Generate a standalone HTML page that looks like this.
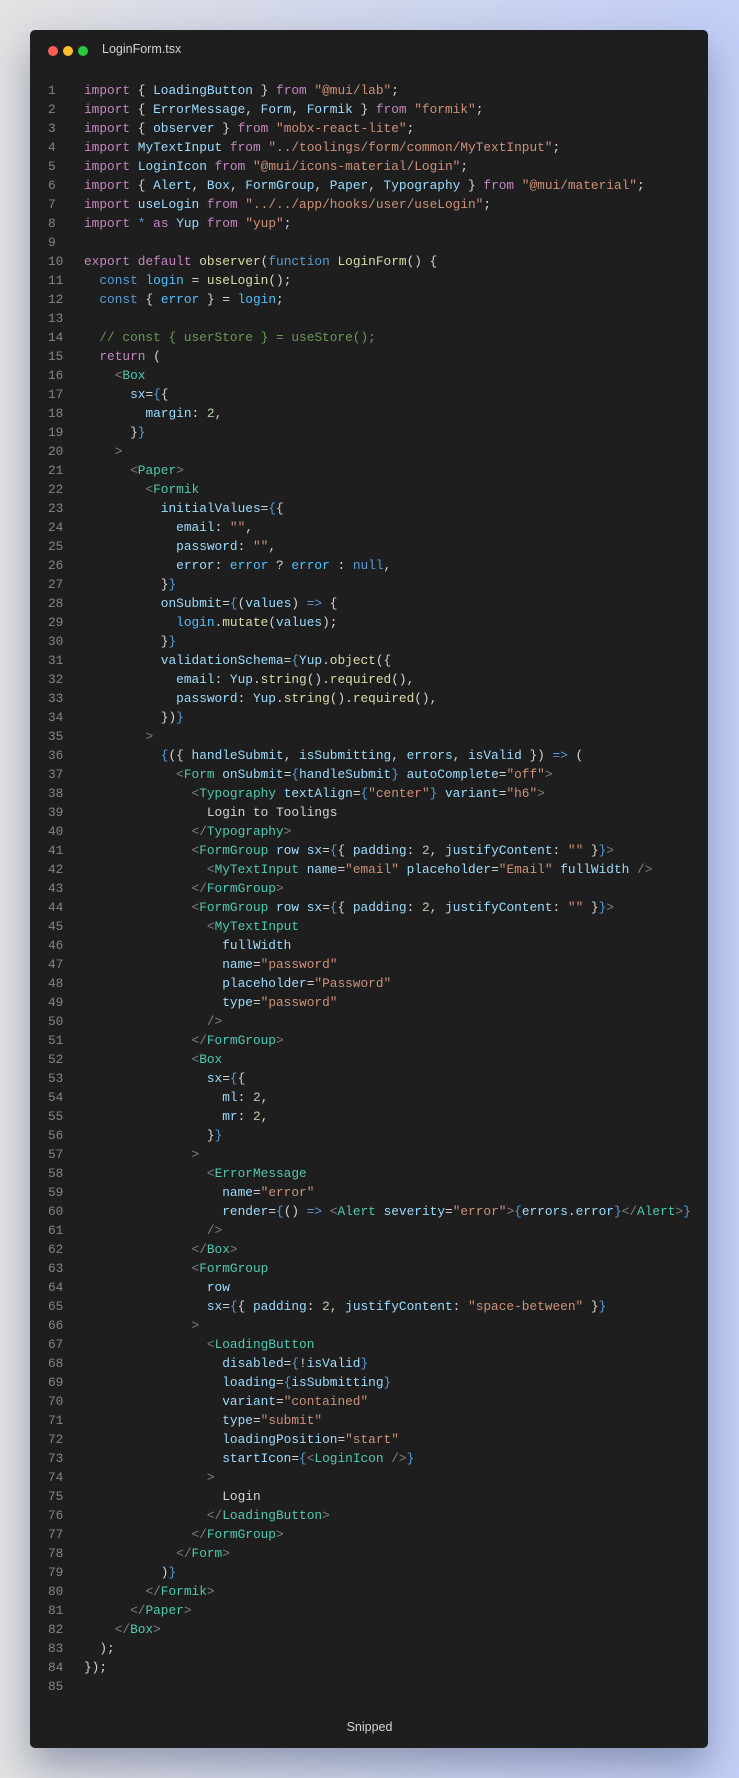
<!DOCTYPE html>
<html><head><meta charset="utf-8"><style>
html,body{margin:0;padding:0}
body{width:739px;height:1778px;background:linear-gradient(90deg,#e2e2e2 0%,#d0d6ec 50%,#c3cff7 100%);position:relative;overflow:hidden;font-family:"Liberation Sans",sans-serif}
.card{position:absolute;left:30px;top:30px;width:678px;height:1718px;background:#1e1e1e;border-radius:5px;box-shadow:0 18px 40px rgba(60,70,110,.45)}
.dot{position:absolute;top:46px;width:10px;height:10px;border-radius:50%}
.title{position:absolute;left:102px;top:42px;color:#d4d4d4;font-size:12.5px}
.code{position:absolute;left:0;top:81px;width:739px;font-family:"Liberation Mono",monospace;font-size:12.8px;color:#d4d4d4;white-space:normal}
.l{height:19px;line-height:19px;position:relative}
.n{position:absolute;left:48px;color:#858585}
.c0{position:absolute;left:84px;white-space:pre}
.k{color:#c586c0}.v{color:#9cdcfe}.s{color:#ce9178}.f{color:#dcdcaa}.t{color:#4ec9b0}.g{color:#808080}.b{color:#569cd6}.cm{color:#6a9955}.nu{color:#b5cea8}.cv{color:#4fc1ff}
.snip{position:absolute;left:0;width:739px;text-align:center;top:1720px;color:#d4d4d4;font-size:12.5px}
</style></head><body>
<div class="card"></div>
<div class="dot" style="left:48px;background:#ff5f57"></div>
<div class="dot" style="left:63px;background:#febc2e"></div>
<div class="dot" style="left:78px;background:#28c840"></div>
<div class="title">LoginForm.tsx</div>
<div class="code">
<div class="l"><span class="n">1</span><span class="c0"><span class="k">import</span> { <span class="v">LoadingButton</span> } <span class="k">from</span> <span class="s">"@mui/lab"</span>;</span></div>
<div class="l"><span class="n">2</span><span class="c0"><span class="k">import</span> { <span class="v">ErrorMessage</span>, <span class="v">Form</span>, <span class="v">Formik</span> } <span class="k">from</span> <span class="s">"formik"</span>;</span></div>
<div class="l"><span class="n">3</span><span class="c0"><span class="k">import</span> { <span class="v">observer</span> } <span class="k">from</span> <span class="s">"mobx-react-lite"</span>;</span></div>
<div class="l"><span class="n">4</span><span class="c0"><span class="k">import</span> <span class="v">MyTextInput</span> <span class="k">from</span> <span class="s">"../toolings/form/common/MyTextInput"</span>;</span></div>
<div class="l"><span class="n">5</span><span class="c0"><span class="k">import</span> <span class="v">LoginIcon</span> <span class="k">from</span> <span class="s">"@mui/icons-material/Login"</span>;</span></div>
<div class="l"><span class="n">6</span><span class="c0"><span class="k">import</span> { <span class="v">Alert</span>, <span class="v">Box</span>, <span class="v">FormGroup</span>, <span class="v">Paper</span>, <span class="v">Typography</span> } <span class="k">from</span> <span class="s">"@mui/material"</span>;</span></div>
<div class="l"><span class="n">7</span><span class="c0"><span class="k">import</span> <span class="v">useLogin</span> <span class="k">from</span> <span class="s">"../../app/hooks/user/useLogin"</span>;</span></div>
<div class="l"><span class="n">8</span><span class="c0"><span class="k">import</span> <span class="b">*</span> <span class="k">as</span> <span class="v">Yup</span> <span class="k">from</span> <span class="s">"yup"</span>;</span></div>
<div class="l"><span class="n">9</span></div>
<div class="l"><span class="n">10</span><span class="c0"><span class="k">export</span> <span class="k">default</span> <span class="f">observer</span>(<span class="b">function</span> <span class="f">LoginForm</span>() {</span></div>
<div class="l"><span class="n">11</span><span class="c0">  <span class="b">const</span> <span class="cv">login</span> = <span class="f">useLogin</span>();</span></div>
<div class="l"><span class="n">12</span><span class="c0">  <span class="b">const</span> { <span class="cv">error</span> } = <span class="cv">login</span>;</span></div>
<div class="l"><span class="n">13</span></div>
<div class="l"><span class="n">14</span><span class="c0">  <span class="cm">// const { userStore } = useStore();</span></span></div>
<div class="l"><span class="n">15</span><span class="c0">  <span class="k">return</span> (</span></div>
<div class="l"><span class="n">16</span><span class="c0">    <span class="g">&lt;</span><span class="t">Box</span></span></div>
<div class="l"><span class="n">17</span><span class="c0">      <span class="v">sx</span>=<span class="b">{</span>{</span></div>
<div class="l"><span class="n">18</span><span class="c0">        <span class="v">margin</span>: <span class="nu">2</span>,</span></div>
<div class="l"><span class="n">19</span><span class="c0">      }<span class="b">}</span></span></div>
<div class="l"><span class="n">20</span><span class="c0">    <span class="g">&gt;</span></span></div>
<div class="l"><span class="n">21</span><span class="c0">      <span class="g">&lt;</span><span class="t">Paper</span><span class="g">&gt;</span></span></div>
<div class="l"><span class="n">22</span><span class="c0">        <span class="g">&lt;</span><span class="t">Formik</span></span></div>
<div class="l"><span class="n">23</span><span class="c0">          <span class="v">initialValues</span>=<span class="b">{</span>{</span></div>
<div class="l"><span class="n">24</span><span class="c0">            <span class="v">email</span>: <span class="s">""</span>,</span></div>
<div class="l"><span class="n">25</span><span class="c0">            <span class="v">password</span>: <span class="s">""</span>,</span></div>
<div class="l"><span class="n">26</span><span class="c0">            <span class="v">error</span>: <span class="cv">error</span> ? <span class="cv">error</span> : <span class="b">null</span>,</span></div>
<div class="l"><span class="n">27</span><span class="c0">          }<span class="b">}</span></span></div>
<div class="l"><span class="n">28</span><span class="c0">          <span class="v">onSubmit</span>=<span class="b">{</span>(<span class="v">values</span>) <span class="b">=&gt;</span> {</span></div>
<div class="l"><span class="n">29</span><span class="c0">            <span class="cv">login</span>.<span class="f">mutate</span>(<span class="v">values</span>);</span></div>
<div class="l"><span class="n">30</span><span class="c0">          }<span class="b">}</span></span></div>
<div class="l"><span class="n">31</span><span class="c0">          <span class="v">validationSchema</span>=<span class="b">{</span><span class="v">Yup</span>.<span class="f">object</span>({</span></div>
<div class="l"><span class="n">32</span><span class="c0">            <span class="v">email</span>: <span class="v">Yup</span>.<span class="f">string</span>().<span class="f">required</span>(),</span></div>
<div class="l"><span class="n">33</span><span class="c0">            <span class="v">password</span>: <span class="v">Yup</span>.<span class="f">string</span>().<span class="f">required</span>(),</span></div>
<div class="l"><span class="n">34</span><span class="c0">          })<span class="b">}</span></span></div>
<div class="l"><span class="n">35</span><span class="c0">        <span class="g">&gt;</span></span></div>
<div class="l"><span class="n">36</span><span class="c0">          <span class="b">{</span>({ <span class="v">handleSubmit</span>, <span class="v">isSubmitting</span>, <span class="v">errors</span>, <span class="v">isValid</span> }) <span class="b">=&gt;</span> (</span></div>
<div class="l"><span class="n">37</span><span class="c0">            <span class="g">&lt;</span><span class="t">Form</span> <span class="v">onSubmit</span>=<span class="b">{</span><span class="v">handleSubmit</span><span class="b">}</span> <span class="v">autoComplete</span>=<span class="s">"off"</span><span class="g">&gt;</span></span></div>
<div class="l"><span class="n">38</span><span class="c0">              <span class="g">&lt;</span><span class="t">Typography</span> <span class="v">textAlign</span>=<span class="b">{</span><span class="s">"center"</span><span class="b">}</span> <span class="v">variant</span>=<span class="s">"h6"</span><span class="g">&gt;</span></span></div>
<div class="l"><span class="n">39</span><span class="c0">                Login to Toolings</span></div>
<div class="l"><span class="n">40</span><span class="c0">              <span class="g">&lt;/</span><span class="t">Typography</span><span class="g">&gt;</span></span></div>
<div class="l"><span class="n">41</span><span class="c0">              <span class="g">&lt;</span><span class="t">FormGroup</span> <span class="v">row</span> <span class="v">sx</span>=<span class="b">{</span>{ <span class="v">padding</span>: <span class="nu">2</span>, <span class="v">justifyContent</span>: <span class="s">""</span> }<span class="b">}</span><span class="g">&gt;</span></span></div>
<div class="l"><span class="n">42</span><span class="c0">                <span class="g">&lt;</span><span class="t">MyTextInput</span> <span class="v">name</span>=<span class="s">"email"</span> <span class="v">placeholder</span>=<span class="s">"Email"</span> <span class="v">fullWidth</span> <span class="g">/&gt;</span></span></div>
<div class="l"><span class="n">43</span><span class="c0">              <span class="g">&lt;/</span><span class="t">FormGroup</span><span class="g">&gt;</span></span></div>
<div class="l"><span class="n">44</span><span class="c0">              <span class="g">&lt;</span><span class="t">FormGroup</span> <span class="v">row</span> <span class="v">sx</span>=<span class="b">{</span>{ <span class="v">padding</span>: <span class="nu">2</span>, <span class="v">justifyContent</span>: <span class="s">""</span> }<span class="b">}</span><span class="g">&gt;</span></span></div>
<div class="l"><span class="n">45</span><span class="c0">                <span class="g">&lt;</span><span class="t">MyTextInput</span></span></div>
<div class="l"><span class="n">46</span><span class="c0">                  <span class="v">fullWidth</span></span></div>
<div class="l"><span class="n">47</span><span class="c0">                  <span class="v">name</span>=<span class="s">"password"</span></span></div>
<div class="l"><span class="n">48</span><span class="c0">                  <span class="v">placeholder</span>=<span class="s">"Password"</span></span></div>
<div class="l"><span class="n">49</span><span class="c0">                  <span class="v">type</span>=<span class="s">"password"</span></span></div>
<div class="l"><span class="n">50</span><span class="c0">                <span class="g">/&gt;</span></span></div>
<div class="l"><span class="n">51</span><span class="c0">              <span class="g">&lt;/</span><span class="t">FormGroup</span><span class="g">&gt;</span></span></div>
<div class="l"><span class="n">52</span><span class="c0">              <span class="g">&lt;</span><span class="t">Box</span></span></div>
<div class="l"><span class="n">53</span><span class="c0">                <span class="v">sx</span>=<span class="b">{</span>{</span></div>
<div class="l"><span class="n">54</span><span class="c0">                  <span class="v">ml</span>: <span class="nu">2</span>,</span></div>
<div class="l"><span class="n">55</span><span class="c0">                  <span class="v">mr</span>: <span class="nu">2</span>,</span></div>
<div class="l"><span class="n">56</span><span class="c0">                }<span class="b">}</span></span></div>
<div class="l"><span class="n">57</span><span class="c0">              <span class="g">&gt;</span></span></div>
<div class="l"><span class="n">58</span><span class="c0">                <span class="g">&lt;</span><span class="t">ErrorMessage</span></span></div>
<div class="l"><span class="n">59</span><span class="c0">                  <span class="v">name</span>=<span class="s">"error"</span></span></div>
<div class="l"><span class="n">60</span><span class="c0">                  <span class="v">render</span>=<span class="b">{</span>() <span class="b">=&gt;</span> <span class="g">&lt;</span><span class="t">Alert</span> <span class="v">severity</span>=<span class="s">"error"</span><span class="g">&gt;</span><span class="b">{</span><span class="v">errors</span>.<span class="v">error</span><span class="b">}</span><span class="g">&lt;/</span><span class="t">Alert</span><span class="g">&gt;</span><span class="b">}</span></span></div>
<div class="l"><span class="n">61</span><span class="c0">                <span class="g">/&gt;</span></span></div>
<div class="l"><span class="n">62</span><span class="c0">              <span class="g">&lt;/</span><span class="t">Box</span><span class="g">&gt;</span></span></div>
<div class="l"><span class="n">63</span><span class="c0">              <span class="g">&lt;</span><span class="t">FormGroup</span></span></div>
<div class="l"><span class="n">64</span><span class="c0">                <span class="v">row</span></span></div>
<div class="l"><span class="n">65</span><span class="c0">                <span class="v">sx</span>=<span class="b">{</span>{ <span class="v">padding</span>: <span class="nu">2</span>, <span class="v">justifyContent</span>: <span class="s">"space-between"</span> }<span class="b">}</span></span></div>
<div class="l"><span class="n">66</span><span class="c0">              <span class="g">&gt;</span></span></div>
<div class="l"><span class="n">67</span><span class="c0">                <span class="g">&lt;</span><span class="t">LoadingButton</span></span></div>
<div class="l"><span class="n">68</span><span class="c0">                  <span class="v">disabled</span>=<span class="b">{</span>!<span class="v">isValid</span><span class="b">}</span></span></div>
<div class="l"><span class="n">69</span><span class="c0">                  <span class="v">loading</span>=<span class="b">{</span><span class="v">isSubmitting</span><span class="b">}</span></span></div>
<div class="l"><span class="n">70</span><span class="c0">                  <span class="v">variant</span>=<span class="s">"contained"</span></span></div>
<div class="l"><span class="n">71</span><span class="c0">                  <span class="v">type</span>=<span class="s">"submit"</span></span></div>
<div class="l"><span class="n">72</span><span class="c0">                  <span class="v">loadingPosition</span>=<span class="s">"start"</span></span></div>
<div class="l"><span class="n">73</span><span class="c0">                  <span class="v">startIcon</span>=<span class="b">{</span><span class="g">&lt;</span><span class="t">LoginIcon</span> <span class="g">/&gt;</span><span class="b">}</span></span></div>
<div class="l"><span class="n">74</span><span class="c0">                <span class="g">&gt;</span></span></div>
<div class="l"><span class="n">75</span><span class="c0">                  Login</span></div>
<div class="l"><span class="n">76</span><span class="c0">                <span class="g">&lt;/</span><span class="t">LoadingButton</span><span class="g">&gt;</span></span></div>
<div class="l"><span class="n">77</span><span class="c0">              <span class="g">&lt;/</span><span class="t">FormGroup</span><span class="g">&gt;</span></span></div>
<div class="l"><span class="n">78</span><span class="c0">            <span class="g">&lt;/</span><span class="t">Form</span><span class="g">&gt;</span></span></div>
<div class="l"><span class="n">79</span><span class="c0">          )<span class="b">}</span></span></div>
<div class="l"><span class="n">80</span><span class="c0">        <span class="g">&lt;/</span><span class="t">Formik</span><span class="g">&gt;</span></span></div>
<div class="l"><span class="n">81</span><span class="c0">      <span class="g">&lt;/</span><span class="t">Paper</span><span class="g">&gt;</span></span></div>
<div class="l"><span class="n">82</span><span class="c0">    <span class="g">&lt;/</span><span class="t">Box</span><span class="g">&gt;</span></span></div>
<div class="l"><span class="n">83</span><span class="c0">  );</span></div>
<div class="l"><span class="n">84</span><span class="c0">});</span></div>
<div class="l"><span class="n">85</span></div>
</div>
<div class="snip">Snipped</div>
</body></html>
